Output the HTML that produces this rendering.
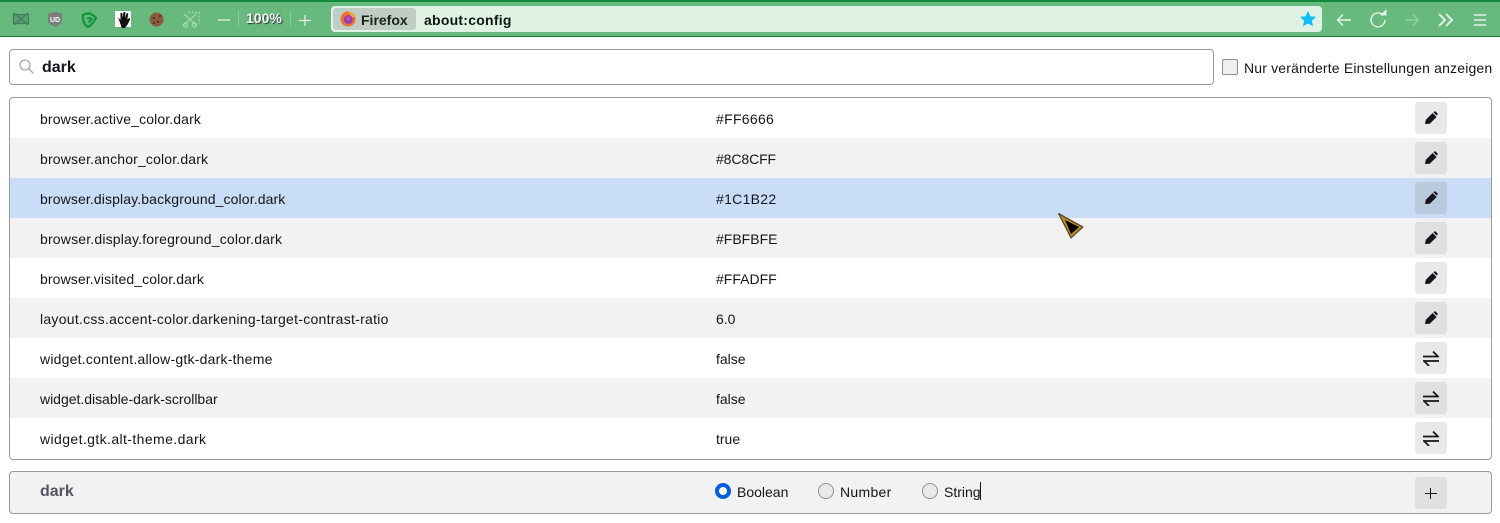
<!DOCTYPE html>
<html lang="de"><head><meta charset="utf-8"><title>about:config</title>
<style>
html,body{margin:0;padding:0;width:1500px;height:523px;overflow:hidden;background:#fff}
body{position:relative;font-family:"Liberation Sans",sans-serif;font-size:14px;color:#15141a}
div,span,svg{position:absolute;box-sizing:border-box}
span.t{white-space:nowrap;line-height:18px}
.row{left:10px;width:1481px;height:40px}
.alt{background:#f2f2f2}
.btn{left:1405px;top:4px;width:32px;height:32px;border-radius:3px;background:#e9e9e9}
.alt .btn{background:#e0e0e0}
.n{left:30px;top:12px}
.v{left:706px;top:12px}
.btn svg{left:8px;top:8px}
</style></head><body>
<div style="left:0;top:0;width:1500px;height:37px;background:#68b97e;border-top:2px solid #128a3c;border-bottom:1px solid #1c7c3a"></div>
<svg style="left:0;top:0" width="330" height="37" viewBox="0 0 330 37">
<path d="M13.500 14.500h15v9h-15z" fill="#5a9d74" stroke="#3f8059" stroke-width="1.300"/><path d="M14 13l14 12M28 13 14 25" stroke="#3f8059" stroke-width="1.300" fill="none"/>
<path d="M48 13.500q6-1.500 7-1.500t7 1.500v7q0 4-7 6.500q-7-2.500-7-6.500z" fill="#7a7f7c"/>
<text x="55" y="22" font-size="7" font-weight="700" text-anchor="middle" fill="#fff" font-family="Liberation Sans">UD</text>
<g fill="none" stroke="#12983c" stroke-width="2.400"><path d="M83 15q7-4 13 3q-4 7-8 9q-6-4-5-12z"/><path d="M87 18.500q3-1 4.500 .5q-2 3-3 3"/></g>
<rect x="115" y="11" width="16" height="16" fill="#fff"/>
<path d="M118 17l2.500 3 0-7 1.800 0 .4 5 .8-6 1.800 0 0 6 1.300-5 1.700 .5-1 6 1.800-1.500 1.200 1-3 6-2.500 3h-3z" fill="#111"/>
<circle cx="156.500" cy="19.500" r="7" fill="#8a5a3c"/><g fill="#3d2a20"><circle cx="154" cy="18" r="1"/><circle cx="158" cy="22" r="1"/><circle cx="154" cy="23" r="1"/><circle cx="160" cy="16" r="1"/></g>
<g fill="none" stroke="#9fd6b0" stroke-width="1.400"><path d="M188 12.500h11v11" stroke-dasharray="2 1.500"/><path d="M184 14l12 11M196 14l-12 11"/><circle cx="185.500" cy="25" r="2"/><circle cx="194.500" cy="25" r="2"/></g>
<path d="M218 20h12" stroke="#e8f4ea" stroke-width="1.200"/><path d="M238.500 11v15M290.500 11v15" stroke="#8ccb9d"/>
<path d="M299 20.500h12M305 15v11" stroke="#e8f4ea" stroke-width="1.200"/>
</svg>
<span class="t" style="left:246px;top:9px;font-size:14px;font-weight:700;color:#f2f8f3;text-shadow:1px 1px 1px #333">100%</span>
<div style="left:331px;top:6px;width:991px;height:26px;background:#e0f2e4;border-radius:4px"></div>
<div style="left:333px;top:8px;width:83px;height:22px;background:#bfcdc4;border-radius:3px"></div>
<svg style="left:340px;top:11px" width="16" height="16" viewBox="0 0 16 16"><circle cx="8" cy="8" r="7.500" fill="#f0702a"/><path d="M8 .5a7.500 7.500 0 0 1 7 5l-3 1z" fill="#f9a52b"/><circle cx="8.300" cy="8.500" r="4.500" fill="#8a3fc0"/><circle cx="8.300" cy="7.500" r="2.300" fill="#d04a9a"/></svg>
<span class="t" style="left:361px;top:11px;font-weight:700;font-size:14px;color:#15241c">Firefox</span>
<span class="t" style="left:424px;top:11px;font-weight:700;font-size:14px;color:#0c1510;letter-spacing:.24px">about:config</span>
<svg style="left:1299px;top:10px" width="18" height="18" viewBox="0 0 18 18"><path d="M9 1l2.400 5.200 5.600.7-4.100 3.800 1.100 5.600L9 13.500l-5 2.800 1.100-5.600L1 6.900l5.600-.7z" fill="#12bcf5"/></svg>
<svg style="left:1330px;top:0" width="170" height="37" viewBox="0 0 170 37"><g fill="none" stroke="#e6f4e9" stroke-width="1.400">
<path d="M21 20H7.500M13 14.500l-5.500 5.500 5.500 5.500"/>
<path d="M52.500 14.500a7 7 0 1 0 2.500 5.500"/><path d="M50 15.500h6.500v-6.500" fill="#e6f4e9" stroke="none"/>
<path d="M75 20h13.500M83 14.500l5.500 5.500-5.500 5.500" stroke="#93d0a3"/>
<path d="M109 14l6 6-6 6M116 14l6 6-6 6" stroke-width="1.900"/>
<path d="M144 15h12M144 20h12M144 25h12" stroke-width="1.600"/></g></svg>

<div style="left:9px;top:49px;width:1205px;height:36px;border:1px solid #9a9a9a;border-radius:4px"></div>
<svg style="left:18px;top:58px" width="17" height="17" viewBox="0 0 17 17"><circle cx="7" cy="7" r="5" fill="none" stroke="#a8a8a8" stroke-width="1.300"/><path d="M10.500 10.500l5 5" stroke="#a8a8a8" stroke-width="1.300"/></svg>
<span class="t" style="left:42px;top:59px;font-weight:700;font-size:16px">dark</span>
<div style="left:1222px;top:59px;width:16px;height:16px;background:#efefef;border:1px solid #8f8f8f;border-radius:2px"></div>
<span class="t" style="left:1244px;top:59px;font-size:14px;letter-spacing:.17px">Nur veränderte Einstellungen anzeigen</span>

<div style="left:9px;top:97px;width:1483px;height:363px;border:1px solid #9a9a9a;border-radius:4px"></div>

<div class="row" style="top:98px"><span class="t n" style="letter-spacing:.12px">browser.active_color.dark</span><span class="t v" style="letter-spacing:.3px">#FF6666</span><div class="btn"><svg width="16" height="16" viewBox="0 0 16 16"><path d="M2 14l.8-4.200 6.800-6.800 4 4-6.800 6.800zM10.400 2.200l.8-.6q.8-.6 1.500 0l1.700 1.700q.6.700 0 1.500l-.6.800z" fill="#15141a"/></svg></div></div>
<div class="row alt" style="top:138px"><span class="t n" style="letter-spacing:.16px">browser.anchor_color.dark</span><span class="t v" style="letter-spacing:-.1px">#8C8CFF</span><div class="btn"><svg width="16" height="16" viewBox="0 0 16 16"><path d="M2 14l.8-4.200 6.800-6.800 4 4-6.800 6.800zM10.400 2.200l.8-.6q.8-.6 1.500 0l1.700 1.700q.6.700 0 1.500l-.6.800z" fill="#15141a"/></svg></div></div>
<div class="row" style="top:178px;background:#c9ddf6"><span class="t n" style="letter-spacing:.12px">browser.display.background_color.dark</span><span class="t v" style="letter-spacing:.3px">#1C1B22</span><div class="btn" style="background:#b9c9de"><svg width="16" height="16" viewBox="0 0 16 16"><path d="M2 14l.8-4.200 6.800-6.800 4 4-6.800 6.800zM10.400 2.200l.8-.6q.8-.6 1.500 0l1.700 1.700q.6.700 0 1.500l-.6.800z" fill="#15141a"/></svg></div></div>
<div class="row alt" style="top:218px"><span class="t n" style="letter-spacing:.18px">browser.display.foreground_color.dark</span><span class="t v">#FBFBFE</span><div class="btn"><svg width="16" height="16" viewBox="0 0 16 16"><path d="M2 14l.8-4.200 6.800-6.800 4 4-6.800 6.800zM10.400 2.200l.8-.6q.8-.6 1.500 0l1.700 1.700q.6.700 0 1.500l-.6.800z" fill="#15141a"/></svg></div></div>
<div class="row" style="top:258px"><span class="t n" style="letter-spacing:.11px">browser.visited_color.dark</span><span class="t v">#FFADFF</span><div class="btn"><svg width="16" height="16" viewBox="0 0 16 16"><path d="M2 14l.8-4.200 6.800-6.800 4 4-6.800 6.800zM10.400 2.200l.8-.6q.8-.6 1.500 0l1.700 1.700q.6.700 0 1.500l-.6.800z" fill="#15141a"/></svg></div></div>
<div class="row alt" style="top:298px"><span class="t n" style="letter-spacing:.27px">layout.css.accent-color.darkening-target-contrast-ratio</span><span class="t v">6.0</span><div class="btn"><svg width="16" height="16" viewBox="0 0 16 16"><path d="M2 14l.8-4.200 6.800-6.800 4 4-6.800 6.800zM10.400 2.200l.8-.6q.8-.6 1.500 0l1.700 1.700q.6.700 0 1.500l-.6.800z" fill="#15141a"/></svg></div></div>
<div class="row" style="top:338px"><span class="t n" style="letter-spacing:.22px">widget.content.allow-gtk-dark-theme</span><span class="t v">false</span><div class="btn"><svg width="16" height="16" viewBox="0 0 16 16"><path d="M0 6.500h15l-5-5M16 11H1l5 5" fill="none" stroke="#15141a" stroke-width="1.700"/></svg></div></div>
<div class="row alt" style="top:378px"><span class="t n" style="letter-spacing:-.02px">widget.disable-dark-scrollbar</span><span class="t v">false</span><div class="btn"><svg width="16" height="16" viewBox="0 0 16 16"><path d="M0 6.500h15l-5-5M16 11H1l5 5" fill="none" stroke="#15141a" stroke-width="1.700"/></svg></div></div>
<div class="row" style="top:418px"><span class="t n" style="letter-spacing:.4px">widget.gtk.alt-theme.dark</span><span class="t v">true</span><div class="btn"><svg width="16" height="16" viewBox="0 0 16 16"><path d="M0 6.500h15l-5-5M16 11H1l5 5" fill="none" stroke="#15141a" stroke-width="1.700"/></svg></div></div>

<svg style="left:1055px;top:210px" width="32" height="32" viewBox="0 0 32 32"><path d="M3.500 3.500L28 17 16 28z" fill="#b5852d" stroke="#4a3a1a" stroke-width="1" stroke-linejoin="round"/><path d="M10 10L24 17 16 24z" fill="#000"/></svg>

<div style="left:9px;top:471px;width:1483px;height:43px;background:#f2f2f2;border:1px solid #9a9a9a;border-radius:4px"></div>
<span class="t" style="left:40px;top:483px;font-weight:700;font-size:16px;color:#55555f">dark</span>
<div style="left:715px;top:483px;width:16px;height:16px;background:#fff;border:4px solid #0060df;border-radius:50%"></div>
<span class="t" style="left:737px;top:483px">Boolean</span>
<div style="left:818px;top:483px;width:16px;height:16px;background:#e9e9e9;border:1px solid #8f8f8f;border-radius:50%"></div>
<span class="t" style="left:840px;top:483px;letter-spacing:.3px">Number</span>
<div style="left:922px;top:483px;width:16px;height:16px;background:#e9e9e9;border:1px solid #8f8f8f;border-radius:50%"></div>
<span class="t" style="left:944px;top:483px">String</span>
<div style="left:980px;top:482px;width:1px;height:18px;background:#15141a"></div>
<div style="left:1415px;top:477px;width:32px;height:32px;background:#e0e0e0;border-radius:3px"></div>
<svg style="left:1423px;top:485px" width="16" height="16" viewBox="0 0 16 16"><path d="M2 8.500h12M7.500 3v11" stroke="#15141a" stroke-width="1" fill="none"/></svg>
</body></html>
